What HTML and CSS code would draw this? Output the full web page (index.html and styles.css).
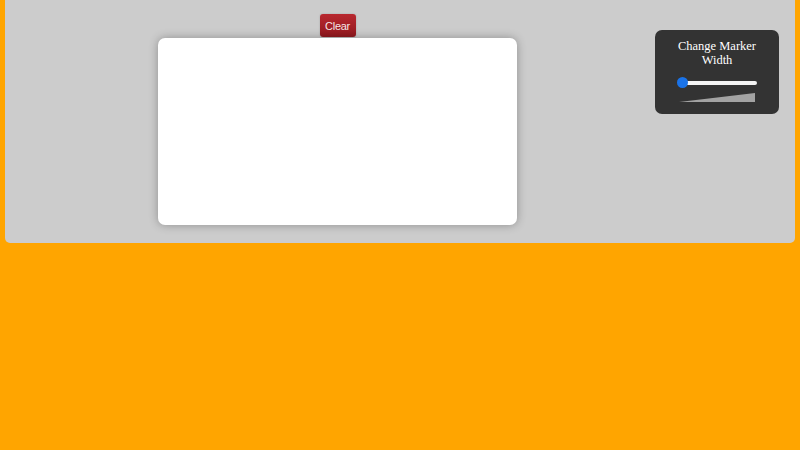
FILE: index.html
```html
<!DOCTYPE html>
<html>
<head>
<meta charset="utf-8">
<link rel="stylesheet" href="styles.css">
</head>
<body>
<div class="stage">
  <div class="board">
    <button class="clear-btn">Clear</button>
    <div class="canvas"></div>
  </div>
  <div class="panel">
    <div class="panel-title">Change Marker Width</div>
    <div class="slider">
      <div class="slider-track"></div>
      <div class="slider-thumb"></div>
    </div>
    <svg class="wedge" width="76" height="9" viewBox="0 0 76 9"><polygon points="0,9 76,0 76,9" fill="#a3a3a3"/></svg>
  </div>
</div>
</body>
</html>
```
FILE: styles.css
```css
html, body {
  margin: 0;
  padding: 0;
}
body {
  background: #ffa500;
  width: 800px;
  height: 450px;
  overflow: hidden;
  font-family: "Liberation Serif", serif;
}
.stage {
  margin: 0 5px;
  height: 243px;
  background: #cccccc;
  border-radius: 0 0 5px 5px;
  display: flex;
  align-items: flex-start;
  padding-top: 14px;
  box-sizing: border-box;
}
.board {
  margin-left: 153px;
  display: flex;
  flex-direction: column;
  align-items: center;
  gap: 1px;
}
.clear-btn {
  height: 23px;
  width: 36px;
  padding: 0;
  border: none;
  border-radius: 3px;
  background: linear-gradient(#b8282f, #92191f);
  color: #f6e6e6;
  font-family: "Liberation Sans", Arial, sans-serif;
  font-size: 11px;
  letter-spacing: -0.3px;
  box-shadow: 0 0 2px rgba(0,0,0,0.2);
}
.canvas {
  width: 359px;
  height: 187px;
  background: #fff;
  border-radius: 7px;
  box-shadow: 0 0 10px rgba(0,0,0,0.3);
}
.panel {
  margin-left: auto;
  margin-right: 16px;
  margin-top: 16px;
  width: 124px;
  height: 84px;
  box-sizing: border-box;
  background: #333333;
  border-radius: 7px;
  padding: 9px 12px 0;
  display: flex;
  flex-direction: column;
  align-items: center;
}
.panel-title {
  width: 100px;
  color: #ffffff;
  font-size: 12.5px;
  line-height: 14px;
  text-align: center;
}
.slider {
  position: relative;
  width: 80px;
  height: 11px;
  margin-top: 10px;
}
.slider-track {
  position: absolute;
  left: 3px;
  right: 0;
  top: 4px;
  height: 4px;
  background: #f4f4f4;
  border-radius: 2px;
}
.slider-thumb {
  position: absolute;
  left: 0;
  top: 0;
  width: 11px;
  height: 11px;
  border-radius: 50%;
  background: #1a73e8;
}
.wedge {
  display: block;
  margin-top: 5px;
}
```
